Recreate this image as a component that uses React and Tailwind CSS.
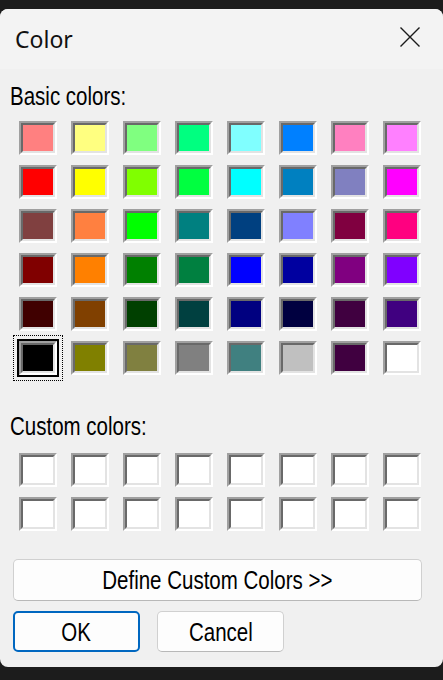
const basic = [
  ['#ff8080', '#ffff80', '#80ff80', '#00ff80', '#80ffff', '#0080ff', '#ff80c0', '#ff80ff'],
  ['#ff0000', '#ffff00', '#80ff00', '#00ff40', '#00ffff', '#0080c0', '#8080c0', '#ff00ff'],
  ['#804040', '#ff8040', '#00ff00', '#008080', '#004080', '#8080ff', '#800040', '#ff0080'],
  ['#800000', '#ff8000', '#008000', '#008040', '#0000ff', '#0000a0', '#800080', '#8000ff'],
  ['#400000', '#804000', '#004000', '#004040', '#000080', '#000040', '#400040', '#400080'],
  ['#000000', '#808000', '#808040', '#808080', '#408080', '#c0c0c0', '#400040', '#ffffff'],
];

const dlgFont = { fontFamily: '"Liberation Sans", Arial, sans-serif' };

// the dialog font is narrower than Arial, so squeeze it a little
const Narrow = ({ children, center }) => (
  <span
    className={'inline-block whitespace-nowrap scale-x-[0.82] ' + (center ? 'origin-center' : 'origin-left')}
  >
    {children}
  </span>
);

const Swatch = ({ color, selected }) => (
  <div
    className={
      'w-[38px] h-[34px] border-2 border-t-[#a0a0a0] border-l-[#a0a0a0] border-b-white border-r-white ' +
      (selected ? 'shadow-[0_0_0_2px_#000] outline-1 outline-dotted outline-black outline-offset-[5px]' : '')
    }
  >
    <div
      className="w-full h-full border-2 border-t-[#696969] border-l-[#696969] border-b-[#e3e3e3] border-r-[#e3e3e3]"
      style={{ backgroundColor: color }}
    />
  </div>
);

const Button = ({ children, primary, className = '' }) => (
  <button
    className={
      'h-[41px] rounded-[5px] bg-[#fdfdfd] text-[25px] leading-[30px] text-black flex items-center justify-center ' +
      (primary
        ? 'border-2 border-[#0067c0]'
        : 'border border-[#d0d0d0] border-b-[#b8b8b8]') +
      ' ' +
      className
    }
    style={dlgFont}
  >
    <Narrow center>{children}</Narrow>
  </button>
);

export default function App() {
  return (
    <div className="w-[443px] h-[680px] bg-[#1c1c1c] pt-[9px] pb-[13px]">
      <div className="h-full rounded-[8px] bg-[#f0f0f0] flex flex-col overflow-hidden">
        <div className="h-[60px] bg-[#f3f3f3] flex items-center justify-between pl-[15px] pr-[23px]">
          <span className="text-[23px] text-[#111] leading-none" style={{ fontFamily: '"Noto Sans", "Open Sans", sans-serif' }}>
            Color
          </span>
          <svg width="20" height="20" viewBox="0 0 20 20" className="mb-[4px]">
            <path d="M0.5 0.5 L19.5 19.5 M19.5 0.5 L0.5 19.5" stroke="#1a1a1a" strokeWidth="1.4" />
          </svg>
        </div>

        <div className="flex flex-col pl-[10px]" style={dlgFont}>
          <div className="mt-[12px] text-[25px] leading-[30px] text-black">
            <Narrow>Basic colors:</Narrow>
          </div>
          <div className="mt-[10px] ml-[9px] grid grid-cols-[repeat(8,38px)] gap-x-[14px] gap-y-[10px]">
            {basic.map((row, r) =>
              row.map((c, i) => <Swatch key={r + '-' + i} color={c} selected={r === 5 && i === 0} />)
            )}
          </div>

          <div className="mt-[36px] text-[25px] leading-[30px] text-black">
            <Narrow>Custom colors:</Narrow>
          </div>
          <div className="mt-[12px] ml-[9px] grid grid-cols-[repeat(8,38px)] gap-x-[14px] gap-y-[10px]">
            {Array.from({ length: 16 }).map((_, i) => (
              <Swatch key={i} color="#ffffff" />
            ))}
          </div>

          <Button className="mt-[28px] ml-[3px] w-[409px] h-[42px]">Define Custom Colors &gt;&gt;</Button>
          <div className="mt-[10px] ml-[3px] flex gap-[17px]">
            <Button primary className="w-[127px]">OK</Button>
            <Button className="w-[127px]">Cancel</Button>
          </div>
        </div>
      </div>
    </div>
  );
}
